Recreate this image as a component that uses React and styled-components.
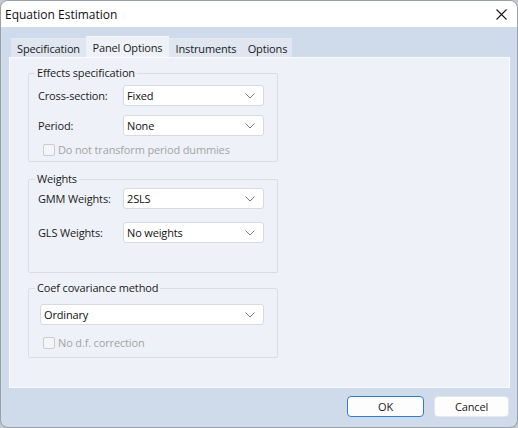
import React from "react";
import styled, { createGlobalStyle } from "styled-components";

const GlobalStyle = createGlobalStyle`
  body {
    margin: 0;
    background: #c4c8ce;
    font-family: "Open Sans", "Noto Sans", sans-serif;
    font-size: 11px;
    letter-spacing: -0.15px;
    color: #1a1a1a;
  }
`;

const Chevron = () => (
  <svg width="10" height="6" viewBox="0 0 10 6">
    <path d="M0.5 0.5 L5 5 L9.5 0.5" fill="none" stroke="#7a7a7a" strokeWidth="1" />
  </svg>
);

const CloseIcon = () => (
  <svg width="11" height="11" viewBox="0 0 11 11">
    <path d="M0.5 0.5 L10.5 10.5 M10.5 0.5 L0.5 10.5" stroke="#1a1a1a" strokeWidth="1.1" />
  </svg>
);

const Dropdown = ({ value, width }) => (
  <Select $width={width}>
    <span>{value}</span>
    <Chevron />
  </Select>
);

const Check = ({ label, indent, shift }) => (
  <CheckRow $indent={indent} $shift={shift}>
    <Box />
    <span>{label}</span>
  </CheckRow>
);

const App = () => {
  return (
    <>
      <GlobalStyle />
      <Window>
        <TitleBar>
          <span>Equation Estimation</span>
          <CloseIcon />
        </TitleBar>
        <Body>
          <TabRow>
            <Tab $w={75}>Specification</Tab>
            <Tab $w={83} $active>Panel Options</Tab>
            <Tab $w={74}>Instruments</Tab>
            <Tab $w={49}>Options</Tab>
          </TabRow>
          <Panel>
            <Group $height={96}>
              <Legend>Effects specification</Legend>
              <Fields $top={5}>
                <Row>
                  <Label>Cross-section:</Label>
                  <Dropdown value="Fixed" />
                </Row>
                <Row>
                  <Label>Period:</Label>
                  <Dropdown value="None" />
                </Row>
                <Check label="Do not transform period dummies" shift={-3} />
              </Fields>
            </Group>
            <Group $height={101} $gap={10}>
              <Legend>Weights</Legend>
              <Fields $top={2} $rowGap={13}>
                <Row>
                  <Label>GMM Weights:</Label>
                  <Dropdown value="2SLS" />
                </Row>
                <Row>
                  <Label>GLS Weights:</Label>
                  <Dropdown value="No weights" />
                </Row>
              </Fields>
            </Group>
            <Group $height={77} $gap={8}>
              <Legend>Coef covariance method</Legend>
              <Fields $top={9} $left={11}>
                <Dropdown value="Ordinary" width={224} />
                <Check label="No d.f. correction" indent={3} shift={1} />
              </Fields>
            </Group>
          </Panel>
          <Footer>
            <Button $primary>OK</Button>
            <Button>Cancel</Button>
          </Footer>
        </Body>
      </Window>
    </>
  );
};

// Styles
const Window = styled.div`
  width: 518px;
  height: 428px;
  box-sizing: border-box;
  border: 1px solid #9aa0a8;
  border-radius: 8px;
  overflow: hidden;
  display: flex;
  flex-direction: column;
  background: #cfdbeb;
`;

const TitleBar = styled.div`
  height: 26px;
  flex-shrink: 0;
  background: #ffffff;
  display: flex;
  align-items: center;
  justify-content: space-between;
  padding: 0 10px 0 4px;
  font-size: 12px;
  letter-spacing: 0;
  color: #111;
`;

const Body = styled.div`
  flex: 1;
  display: flex;
  flex-direction: column;
  padding: 9px 7px 0 8px;
`;

const TabRow = styled.div`
  display: flex;
  align-items: flex-end;
  height: 21px;
  padding-left: 2px;
`;

const Tab = styled.div`
  width: ${p => p.$w}px;
  height: ${p => (p.$active ? 21 : 19)}px;
  box-sizing: border-box;
  display: flex;
  align-items: center;
  justify-content: center;
  background: ${p => (p.$active ? "#eef2f8" : "#dfe6f0")};
  border-top: 1px solid ${p => (p.$active ? "#f6f8fb" : "#e6ebf2")};
  color: #1a1a1a;
  white-space: nowrap;
  padding-top: ${p => (p.$active ? 0 : 1)}px;
`;

const Panel = styled.div`
  height: 331px;
  box-sizing: border-box;
  flex-shrink: 0;
  background: #eef2f8;
  border: 1px solid #f9fbfd;
  padding: 8px 0 0 18px;
  display: flex;
  flex-direction: column;
`;

const Group = styled.fieldset`
  width: 250px;
  height: ${p => p.$height}px;
  box-sizing: border-box;
  margin: ${p => p.$gap || 0}px 0 0 0;
  padding: 0;
  border: 1px solid #d9dde4;
  border-radius: 2px;
  min-width: 0;
`;

const Legend = styled.legend`
  margin-left: 6px;
  padding: 0 2px;
  line-height: 14px;
  color: #1a1a1a;
`;

const Fields = styled.div`
  display: flex;
  flex-direction: column;
  gap: ${p => p.$rowGap || 9}px;
  padding: ${p => p.$top}px 0 0 ${p => p.$left || 9}px;
`;

const Row = styled.div`
  display: flex;
  align-items: center;
`;

const Label = styled.span`
  width: 85px;
  flex-shrink: 0;
  color: #1a1a1a;
`;

const Select = styled.div`
  width: ${p => p.$width || 141}px;
  height: 21px;
  box-sizing: border-box;
  background: #ffffff;
  border: 1px solid #d6d9de;
  border-radius: 3px;
  display: flex;
  align-items: center;
  justify-content: space-between;
  padding: 0 8px 0 3px;
  color: #111;
`;

const CheckRow = styled.div`
  display: flex;
  align-items: center;
  gap: 3px;
  margin-top: ${p => p.$shift || 0}px;
  padding-left: ${p => (p.$indent === undefined ? 5 : p.$indent)}px;
  color: #a3a3a3;
`;

const Box = styled.span`
  width: 12px;
  height: 12px;
  box-sizing: border-box;
  border: 1px solid #c9cbcf;
  border-radius: 2px;
  background: #f3f5f8;
`;

const Footer = styled.div`
  display: flex;
  justify-content: flex-end;
  gap: 10px;
  padding: 8px 1px 0 0;
`;

const Button = styled.div`
  width: ${p => (p.$primary ? 77 : 75)}px;
  height: 21px;
  box-sizing: border-box;
  display: flex;
  align-items: center;
  justify-content: center;
  background: #fdfdfd;
  border: 1px solid ${p => (p.$primary ? "#2f7fd0" : "#e3e6ea")};
  border-radius: 4px;
  color: #1a1a1a;
`;

export default App;
